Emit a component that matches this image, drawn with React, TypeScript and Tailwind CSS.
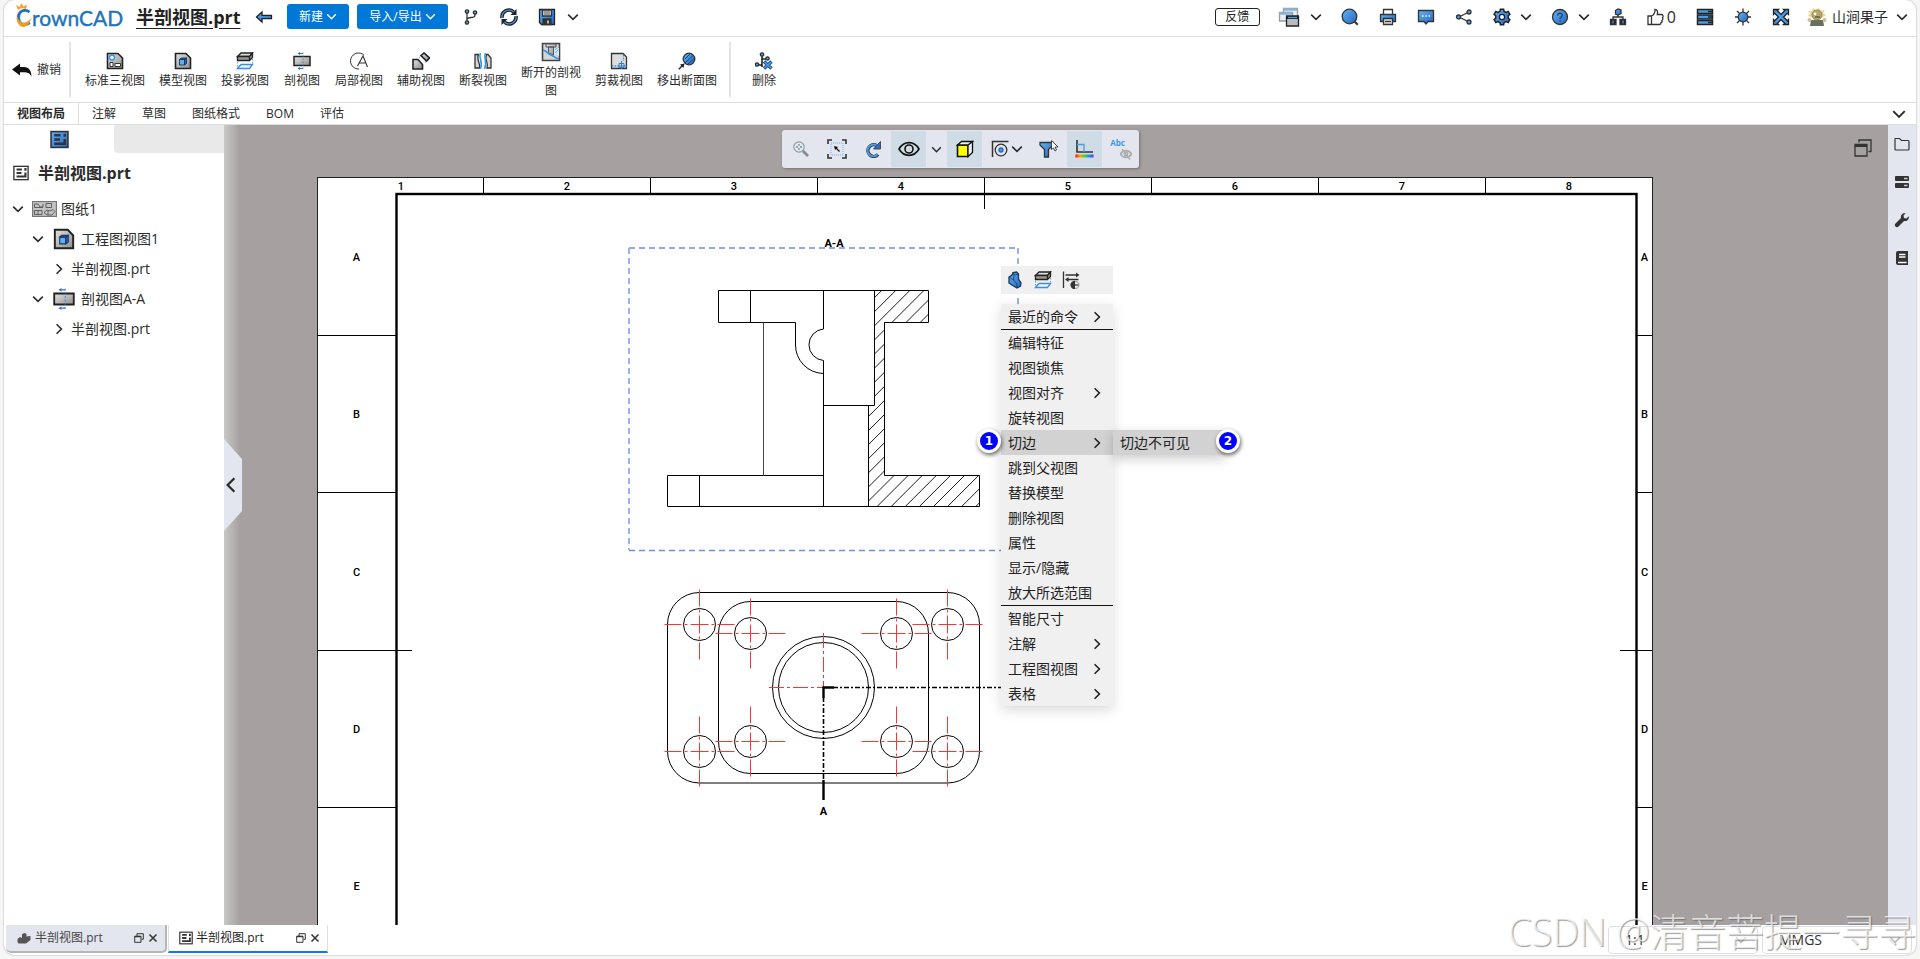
import React, { useState } from 'react';

type IconProps = { className?: string };

const Svg = ({ className = 'h-[18px] w-[18px]', box = '0 0 18 18', children }: { className?: string; box?: string; children: React.ReactNode }) => (
  <svg className={`${className} shrink-0`} viewBox={box} fill="none" stroke="#333" strokeWidth="1.3" aria-hidden="true">
    {children}
  </svg>
);

const Chevron = ({ dir = 'down', className = 'h-[10px] w-[10px]' }: { dir?: 'down' | 'right' | 'left'; className?: string }) => {
  const d = { down: 'M0.2 2.600L5 7.400L9.800 2.600', right: 'M2.600 0.200L7.400 5L2.600 9.800', left: 'M7.400 0.200L2.600 5L7.400 9.800' }[dir];
  return (
    <svg className={`${className} shrink-0 overflow-visible`} viewBox="0 0 10 10" fill="none" stroke="currentColor" strokeWidth="1.6" aria-hidden="true">
      <path d={d} />
    </svg>
  );
};

// Shared gradients referenced by every icon
const Defs = () => (
  <svg className="absolute h-0 w-0" aria-hidden="true">
    <defs>
      <linearGradient id="blue" x1="0" y1="0" x2="1" y2="1">
        <stop offset="0" stopColor="#63b3f3" />
        <stop offset="1" stopColor="#2565c0" />
      </linearGradient>
      <linearGradient id="gray" x1="0" y1="0" x2="1" y2="1">
        <stop offset="0" stopColor="#e2e2e2" />
        <stop offset="1" stopColor="#8f8f8f" />
      </linearGradient>
      <linearGradient id="rainbow">
        <stop offset="0" stopColor="#f00" />
        <stop offset="0.25" stopColor="#fa0" />
        <stop offset="0.5" stopColor="#5c3" />
        <stop offset="0.75" stopColor="#19e" />
        <stop offset="1" stopColor="#82d" />
      </linearGradient>
    </defs>
  </svg>
);

const Logo = () => (
  <svg className="h-[32px] w-[110px] shrink-0" viewBox="0 0 110 32" role="img" aria-label="CrownCAD">
    <text x="1" y="25" fontFamily="Lato" fontSize="22" fontWeight="700" fill="#2173b9">C</text>
    <text x="17" y="25" fontFamily="Lato" fontSize="21" fontWeight="400" fill="#2173b9" stroke="#2173b9" strokeWidth="0.4">rownCAD</text>
    <path d="M2 15C1 21 4 26 9 26C13 25 15 21 17 16C14 20 11 22 8 21.500C5 21 3 18 2 15Z" fill="#f59a1c" />
    <path d="M3 9L1 4L5 6L6 2L8.500 5.500L12 3.500L11 8C8 6.500 5 7 3 9Z" fill="#f7a12b" />
  </svg>
);

/* ---- header icons ---- */
const BackArrow = () => (
  <Svg><path d="M1.500 9L7 4V7.300H16.500V10.700H7V14Z" fill="url(#blue)" stroke="#222" /></Svg>
);
const BranchIcon = () => (
  <Svg>
    <path d="M5 5V13M13 6V7C13 9 11 9.500 9 9.500C7 9.500 5 10 5 12" />
    <circle cx="5" cy="3.500" r="1.700" fill="#4a9be8" /><circle cx="13" cy="4.500" r="1.700" fill="#4a9be8" /><circle cx="5" cy="14.500" r="1.700" fill="#4a9be8" />
  </Svg>
);
const SyncIcon = () => (
  <Svg>
    <path d="M2 10A7 7 0 0 1 13.500 3.800M16 8A7 7 0 0 1 4.500 14.200" stroke="#222" strokeWidth="3.600" />
    <path d="M2 10A7 7 0 0 1 13.500 3.800M16 8A7 7 0 0 1 4.500 14.200" stroke="#4a9be8" strokeWidth="1.200" />
    <path d="M16.500 1V7H10.500ZM1.500 17V11H7.500Z" fill="#222" stroke="none" />
  </Svg>
);
const SaveIcon = () => (
  <Svg>
    <path d="M1.500 1.500H16.500V16.500H3.500L1.500 14.500Z" fill="url(#blue)" stroke="#222" />
    <path d="M4.500 2H13.500V8H4.500Z" fill="#ddd" /><path d="M6 4H12M6 6H12" strokeWidth="0.800" />
    <path d="M5 11H13V16.500H5Z" fill="#333" /><path d="M10 12.500V15.500" stroke="#fff" />
  </Svg>
);
const WindowsIcon = () => (
  <Svg className="h-[20px] w-[22px]" box="0 0 22 20">
    <path d="M5.500 1.500H19.500V10H5.500Z" fill="#e8eef3" stroke="#9a9a9a" /><path d="M5.500 2.500H19.500" stroke="#8ab4d4" strokeWidth="2.500" />
    <path d="M1.500 5.500H14.500V14H1.500Z" fill="#e8eef3" stroke="#9a9a9a" /><path d="M1.500 6.500H14.500" stroke="#8ab4d4" strokeWidth="2.500" />
    <path d="M8.500 9H20.500V19H8.500Z" fill="#b9bcbf" stroke="#222" /><path d="M8.500 10.500H20.500" stroke="#222" strokeWidth="3" /><path d="M10 10.500H19" stroke="#4a9be8" />
  </Svg>
);
const SearchIcon = () => (
  <Svg><circle cx="8.500" cy="8.500" r="7.300" fill="url(#blue)" /><path d="M13.500 13.500L16.800 16.800" strokeWidth="2" /></Svg>
);
const PrintIcon = () => (
  <Svg>
    <path d="M4.500 1.500H13.500V7H4.500Z" fill="#fff" /><path d="M1.500 6.500H16.500V13.500H1.500Z" fill="url(#blue)" />
    <path d="M4.500 10.500H13.500V16.500H4.500Z" fill="#ddd" /><path d="M6 13.500H12" />
  </Svg>
);
const CommentIcon = () => (
  <Svg><path d="M1.500 2.500H16.500V13.500H11L9 16L7 13.500H1.500Z" fill="url(#blue)" /><path d="M5 8H6.500M8.300 8H9.800M11.500 8H13" stroke="#fff" /></Svg>
);
const ShareIcon = () => (
  <Svg><path d="M14 4L4 9L14 14" /><circle cx="14" cy="4" r="2" fill="#4a9be8" /><circle cx="3.500" cy="9" r="2" fill="#4a9be8" /><circle cx="14" cy="14" r="2" fill="#4a9be8" /></Svg>
);
const GearIcon = () => (
  <Svg>
    <path d="M7.400 1.300H10.600L11.100 3.500L13.200 4.500L15.200 3.400L16.900 6.300L15.300 7.800V10.200L16.900 11.700L15.200 14.600L13.200 13.500L11.100 14.500L10.600 16.700H7.400L6.900 14.500L4.800 13.500L2.800 14.600L1.100 11.700L2.700 10.200V7.800L1.100 6.300L2.800 3.400L4.800 4.500L6.900 3.500Z" fill="url(#blue)" stroke="#222" strokeWidth="1.500" />
    <circle cx="9" cy="9" r="2.600" fill="#fff" stroke="#222" />
  </Svg>
);
const HelpIcon = () => (
  <Svg><circle cx="9" cy="9" r="7.500" fill="url(#blue)" /><path d="M6.700 7.500C6.700 4.500 11.300 4.500 11.300 7.200C11.300 9 9 9 9 11M9 12.300V13.500" stroke="#1d3f70" /></Svg>
);
const SitemapIcon = () => (
  <Svg>
    <path d="M9 6V9M4 12V9H14V12" /><path d="M6.500 2.500L9 1L12 2V5.500L9 7L6.500 6Z" fill="url(#blue)" />
    <path d="M1.500 11.500H7V16.500H1.500ZM11 11.500H16.500V16.500H11Z" fill="#222" /><path d="M4 12.500V15.500M14 12.500V15.500" stroke="#4a9be8" />
  </Svg>
);
const ThumbIcon = () => (
  <Svg className="h-[18px] w-[17px]" box="0 0 17 18">
    <path d="M1 8H4.500V16.500H1ZM4.500 8C7 7 8 4.500 8 1.500C10.500 1.500 11 4 10.300 6.500H14.500C16.500 6.500 16.300 9 15.500 9.500C16.200 10.500 15.800 12 15 12.300C15.300 13.500 14.800 14.500 14 14.700C14 16 13.500 16.500 12.500 16.500H4.500" />
  </Svg>
);
const ServerStack = () => (
  <Svg>{[1.5, 7, 12.5].map(y => <g key={y}><rect x="1.500" y={y} width="15" height="4" fill="#4a9be8" stroke="#222" strokeWidth="1.500" /><path d={`M12 ${y + 2}H16`} stroke="#222" strokeWidth="1.500" /></g>)}</Svg>
);
const SunIcon = () => (
  <Svg>
    <path d="M9 0.500V17.500M1 9H17M3 3L15 15M15 3L3 15" /><circle cx="9" cy="9" r="4.800" fill="url(#blue)" />
  </Svg>
);
const ExpandIcon = () => (
  <Svg>
    <path d="M3 3L15 15M15 3L3 15" stroke="#222" strokeWidth="5" />
    <path d="M1.500 1.500H6.500L1.500 6.500ZM16.500 1.500V6.500L11.500 1.500ZM1.500 16.500V11.500L6.500 16.500ZM16.500 16.500H11.500L16.500 11.500Z" fill="#4a9be8" stroke="#222" />
    <path d="M3.500 3.500L14.500 14.500M14.500 3.500L3.500 14.500" stroke="#4a9be8" strokeWidth="2.400" />
  </Svg>
);
const Avatar = () => (
  <Svg className="h-[20px] w-[20px]" box="0 0 20 20">
    <path d="M3 6L1 4L5 4L6 1L9 3L12 0.500L13 3.500L18 3L16 6L19 8L16 10H4L1 9Z" fill="#f0d68a" stroke="none" />
    <circle cx="10" cy="8" r="5" fill="#b4a66e" stroke="#8a7d52" strokeWidth="0.800" /><circle cx="8" cy="7" r="1.400" fill="#fff" stroke="none" /><path d="M8 10H13" stroke="#6b5d3a" />
    <path d="M4 13H16L17 19H3Z" fill="#66705c" stroke="none" /><circle cx="2.500" cy="13" r="2" fill="#d9b98a" stroke="none" /><circle cx="17.500" cy="13" r="2" fill="#d9b98a" stroke="none" />
  </Svg>
);

/* ---- ribbon icons ---- */
const PAGE = 'M1.500 1.500H12L16.500 6V16.500H1.500Z';
const StandardIcon = () => (
  <Svg><path d={PAGE} fill="url(#gray)" stroke="#222" strokeWidth="1.600" /><circle cx="6" cy="5.500" r="2.500" fill="#e8f2fc" stroke="#3d8ee0" /><path d="M4 10.500H7V14.500H4ZM9 11.500H14.500V14.500H9Z" fill="#fff" strokeWidth="1" /></Svg>
);
const ModelIcon = ({ className }: IconProps) => (
  <Svg className={className}><path d={PAGE} fill="url(#gray)" stroke="#222" strokeWidth="1.600" /><path d="M5.500 7.500H10.500V13H5.500Z" fill="#62aef2" stroke="#17385f" strokeWidth="0.900" /><path d="M5.500 7.500L7 6H12.500L10.500 7.500ZM12.500 6V11.500L10.500 13V7.500Z" fill="#2565c0" stroke="#17385f" strokeWidth="0.900" /></Svg>
);
const ProjectIcon = () => (
  <Svg>
    <path d="M1.500 4.500L5 1H16.500L13.500 4.500Z" fill="#ddd" stroke="#222" /><path d="M1.500 4.500H13.500V8.500H1.500ZM13.500 4.500L16.500 1V5.500L13.500 8.500" fill="#999" stroke="#222" />
    <path d="M1.500 16.500L5 12.500H16.500L13.500 16.500Z" fill="#eaf5fd" stroke="#3d8ee0" /><path d="M1.500 10V16M16.500 7V12" stroke="#3d8ee0" strokeDasharray="1.500 1.500" strokeWidth="0.800" />
  </Svg>
);
const SectionIcon = ({ className }: IconProps) => (
  <Svg className={className}>
    <path d="M1 4.500H17V13.500H1Z" fill="url(#gray)" stroke="#222" strokeWidth="1.500" /><path d="M10 0.500V17.500" stroke="#2f6fc4" strokeDasharray="1.500 1.500" strokeWidth="0.700" />
    <path d="M10 1.500H7M10 16.500H7" stroke="#2f6fc4" strokeWidth="1" /><path d="M7 0L4.500 1.500L7 3ZM7 15L4.500 16.500L7 18Z" fill="#2f6fc4" stroke="none" />
  </Svg>
);
const LocalIcon = () => (
  <Svg><path d="M14 3.200A8 8 0 1 0 9 17" strokeWidth="1" /><path d="M7.500 14L13 4L17.500 15M9.500 11H15.500" strokeWidth="1.100" /></Svg>
);
const AuxIcon = () => (
  <Svg>
    <path d="M1 7.500H6L10.500 12.500V17H1Z" fill="url(#gray)" stroke="#222" strokeWidth="1.600" /><path d="M9 3.500L12 1L17.500 6L14.500 9Z" fill="url(#gray)" stroke="#222" strokeWidth="1.600" />
    <path d="M8 4.500L7 6.500M14 9.500L12 11" stroke="#3d8ee0" strokeWidth="0.800" strokeDasharray="1.500 1" />
  </Svg>
);
const BreakIcon = () => (
  <Svg>
    <path d="M4.500 2.500H1V16H5.500C7 12 2 8 4.500 2.500ZM12.500 2.500H14L17 6V16H13C15 11 10 8 12.500 2.500Z" fill="#d6d6d6" />
    <path d="M6.500 1C4 6 9.500 9 6.500 17M11.500 1C9 6 14 9 10.500 17" stroke="#3d9ae0" strokeWidth="1.600" />
  </Svg>
);
const BrokenOutIcon = () => (
  <Svg className="h-[20px] w-[20px]" box="0 0 20 20">
    <path d="M1.500 1.500H18.500V18.500H1.500Z" fill="#d3d6d8" stroke="#444" strokeWidth="1.600" /><path d="M13 6H18V14L13 12Z" fill="#cfe6f8" stroke="none" />
    <path d="M5 2H15V5H5ZM7.500 5H12.500V13L7.500 11Z" fill="url(#gray)" stroke="#555" strokeWidth="1" /><path d="M2 8C6 9 7 12 10 13S15 17 18 17" stroke="#3d8ee0" strokeWidth="1.600" /><path d="M14 11L17.500 7.500M14 8L16 6" stroke="#3d8ee0" strokeWidth="0.700" />
  </Svg>
);
const CropIcon = () => (
  <Svg><path d="M1.500 1.500H13L16.500 5V16.500H1.500Z" fill="#ddd" /><path d="M2 14H9M13.500 3V9" stroke="#3d8ee0" strokeDasharray="1.500 1.200" /><path d="M9 11.500H14V15.500H9ZM11.500 9V17M9 14H17" stroke="#2f7fd0" strokeWidth="1" /></Svg>
);
const RemovedIcon = () => (
  <Svg><circle cx="11" cy="7" r="5.800" fill="url(#blue)" /><path d="M7 7L12 2M7 11L15 3.500M10 12L16 6.500" stroke="#17385f" strokeWidth="0.900" /><path d="M0.800 17.200L4.500 13.500" strokeWidth="1.600" /><path d="M2 12.500L6.500 11.500L5.500 16Z" fill="#222" stroke="none" /></Svg>
);
const DeleteIcon = () => (
  <Svg>
    <path d="M7 3V15M7 7H11M2 13H7" stroke="#222" strokeWidth="1.600" /><circle cx="7" cy="2.500" r="1.700" fill="#4a9be8" /><circle cx="12.500" cy="6.500" r="1.700" fill="#4a9be8" /><circle cx="2" cy="12.500" r="1.700" fill="#4a9be8" />
    <path d="M9 9.500L16.500 16.500M16.500 9.500L9 16.500" stroke="#1d4f8f" strokeWidth="3.400" /><path d="M9.500 10L16 16M16 10L9.500 16" stroke="#4a9be8" strokeWidth="1.500" />
  </Svg>
);

/* ---- document icons ---- */
const SheetDocIcon = ({ className, blue }: IconProps & { blue?: boolean }) => (
  <Svg className={className}>
    <rect x="1" y="1.500" width="16" height="15" fill={blue ? 'url(#blue)' : '#fff'} stroke="#333" strokeWidth="1.500" />
    <path d="M4 5H10M4 9H9.500M4 13H14V8.500M14 3.500V6.500" strokeWidth="2.400" />
  </Svg>
);
const SheetIcon = () => (
  <Svg className="h-[16px] w-[25px]" box="0 0 25 16">
    <rect x="0.500" y="0.500" width="24" height="15" fill="#c4c4c4" stroke="#777" />
    <path d="M2.500 3H6L8 6H11V3M2.500 3V6.500H11M14 2.500H19.500V6.500H14ZM2.500 9.500H10V13.500H2.500ZM6 9.500V13.500M12 11.500L15 9L18 10L21 8.500L23 10.500L20 14H15ZM16 10V14" stroke="#555" strokeWidth="0.900" />
  </Svg>
);
const PartIcon = () => (
  <Svg className="h-[12px] w-[14px]" box="0 0 14 12"><path d="M0.500 7L3 5L5 6L5 2L8 1L9.500 2V4.500L13.500 4V8L9 11.500H1.500L0.500 10Z" fill="#555" stroke="none" /></Svg>
);
const RestoreIcon = () => (
  <Svg className="h-[10px] w-[10px]" box="0 0 10 10"><path d="M3 3V0.700H9.300V6.300H7.500M0.700 3.200H7V9.300H0.700Z" strokeWidth="1" /><path d="M0.700 3.600H7" /></Svg>
);

const ribbon = [
  { label: '标准三视图', icon: StandardIcon },
  { label: '模型视图', icon: ModelIcon },
  { label: '投影视图', icon: ProjectIcon },
  { label: '剖视图', icon: SectionIcon },
  { label: '局部视图', icon: LocalIcon },
  { label: '辅助视图', icon: AuxIcon },
  { label: '断裂视图', icon: BreakIcon },
  { label: '断开的剖视图', icon: BrokenOutIcon },
  { label: '剪裁视图', icon: CropIcon },
  { label: '移出断面图', icon: RemovedIcon },
];

const ribbonTabs = ['视图布局', '注解', '草图', '图纸格式', 'BOM', '评估'];

const menuItems = [
  { label: '最近的命令', sub: true, line: true },
  { label: '编辑特征' },
  { label: '视图锁焦' },
  { label: '视图对齐', sub: true },
  { label: '旋转视图' },
  { label: '切边', sub: true, active: true },
  { label: '跳到父视图' },
  { label: '替换模型' },
  { label: '删除视图' },
  { label: '属性' },
  { label: '显示/隐藏' },
  { label: '放大所选范围', line: true },
  { label: '智能尺寸' },
  { label: '注解', sub: true },
  { label: '工程图视图', sub: true },
  { label: '表格', sub: true },
];

function Header() {
  return (
    <header className="flex h-[37px] items-center border-b border-[#dcdee4] pr-[9px] pb-[7px] pl-[11px] pt-1">
      <Logo />
      <a href="#" className="ml-[11px] text-lg leading-6 font-bold text-[#222] underline underline-offset-4">半剖视图.prt</a>
      <button aria-label="返回" className="ml-[14px]"><BackArrow /></button>
      <button className="ml-[14px] flex h-[25px] w-[62px] items-center justify-center gap-1 rounded-[3px] bg-[#0078d7] text-xs text-white">
        新建<Chevron className="h-[9px] w-[9px]" />
      </button>
      <button className="ml-2 flex h-[25px] w-[91px] items-center justify-center gap-1 rounded-[3px] bg-[#0078d7] text-xs text-white">
        导入/导出<Chevron className="h-[9px] w-[9px]" />
      </button>
      <div className="ml-[14px] flex items-center gap-5">
        <button aria-label="分支"><BranchIcon /></button>
        <button aria-label="同步"><SyncIcon /></button>
        <div className="flex items-center gap-3">
          <button aria-label="保存"><SaveIcon /></button>
          <button aria-label="保存选项"><Chevron /></button>
        </div>
      </div>
      <div className="ml-auto flex items-center gap-5">
        <button className="-mr-[2px] h-[18px] w-[45px] rounded-[3px] border border-[#222] text-xs leading-4 text-[#222]">反馈</button>
        <div className="flex items-center gap-[11px]">
          <button aria-label="窗口"><WindowsIcon /></button>
          <button aria-label="窗口选项"><Chevron /></button>
        </div>
        <button aria-label="搜索"><SearchIcon /></button>
        <button aria-label="打印"><PrintIcon /></button>
        <button aria-label="消息"><CommentIcon /></button>
        <button aria-label="分享"><ShareIcon /></button>
        <div className="flex items-center gap-[10px]">
          <button aria-label="设置"><GearIcon /></button>
          <button aria-label="设置选项"><Chevron /></button>
        </div>
        <div className="flex items-center gap-[10px]">
          <button aria-label="帮助"><HelpIcon /></button>
          <button aria-label="帮助选项"><Chevron /></button>
        </div>
        <button aria-label="结构"><SitemapIcon /></button>
        <button className="flex items-center gap-[3px] text-base leading-5"><ThumbIcon />0</button>
        <button aria-label="列表"><ServerStack /></button>
        <button aria-label="主题"><SunIcon /></button>
        <button aria-label="全屏"><ExpandIcon /></button>
        <button className="-ml-[3px] flex items-center text-sm leading-5">
          <Avatar />
          <span className="mr-[9px] ml-[5px]">山涧果子</span>
          <Chevron />
        </button>
      </div>
    </header>
  );
}

function Ribbon() {
  return (
    <div className="flex h-[66px] border-b border-[#dcdee4] py-[5px] pl-2">
      <button className="flex items-center gap-[5px] pr-2 text-xs">
        <Svg className="h-[14px] w-[20px]" box="0 0 20 14"><path d="M0 6.500L8 0.500V4H12C17 4 19.500 8 19.500 13.500C17.500 10 15 9.300 12 9.300H8V12.500Z" fill="#111" stroke="none" /></Svg>
        撤销
      </button>
      <div className="w-[2px] bg-[#e3e4e8]" />
      <div className="flex pl-[7px]">
        {ribbon.map(({ label, icon: Icon }) => (
          <button key={label} className="flex max-w-[74px] min-w-[52px] flex-col items-center justify-center gap-[2px] px-[7px] pt-[3px] text-xs leading-[18px]">
            <Icon />
            <span>{label}</span>
          </button>
        ))}
      </div>
      <div className="ml-[5px] w-[2px] bg-[#e3e4e8]" />
      <button className="ml-[14px] flex flex-col items-center justify-center gap-[2px] px-[7px] pt-[3px] text-xs leading-[18px]">
        <DeleteIcon />
        删除
      </button>
    </div>
  );
}

function RibbonTabs() {
  const [active, setActive] = useState('视图布局');
  return (
    <div className="flex h-[22px] items-stretch border-b border-[#dcdee4] pr-[11px]">
      {ribbonTabs.map(tab => (
        <button
          key={tab}
          onClick={() => setActive(tab)}
          className={tab === active ? 'border-r border-[#dcdee4] px-[13px] text-xs font-bold' : 'px-[13px] text-xs'}
        >
          {tab}
        </button>
      ))}
      <button aria-label="收起" className="ml-auto"><Chevron className="h-[12px] w-[12px]" /></button>
    </div>
  );
}

function Tree() {
  return (
    <aside className="w-[220px] shrink-0 bg-white">
      <div className="flex h-[28px]">
        <button aria-label="图纸树" className="flex w-[110px] items-center justify-center"><SheetDocIcon blue className="h-[19px] w-[19px]" /></button>
        <div className="flex-1 rounded-bl bg-[#e9e9e9]" />
      </div>
      <h2 className="mt-2 flex h-6 items-center gap-[9px] pl-[9px] text-base font-bold"><SheetDocIcon className="h-[16px] w-[16px]" />半剖视图.prt</h2>
      <ul className="mt-[9px] text-sm">
        <li className="flex h-[30px] items-center pl-[9px]"><Chevron /><span className="mr-[4px] ml-[9px]"><SheetIcon /></span>图纸1</li>
        <li className="flex h-[30px] items-center pl-[29px]"><Chevron /><span className="mr-[6px] ml-[10px]"><ModelIcon className="h-[22px] w-[22px]" /></span>工程图视图1</li>
        <li className="flex h-[30px] items-center gap-[7px] pl-[50px]"><Chevron dir="right" />半剖视图.prt</li>
        <li className="flex h-[30px] items-center pl-[29px]"><Chevron /><span className="mr-[6px] ml-[10px]"><SectionIcon className="h-[22px] w-[22px]" /></span>剖视图A-A</li>
        <li className="flex h-[30px] items-center gap-[7px] pl-[50px]"><Chevron dir="right" />半剖视图.prt</li>
      </ul>
    </aside>
  );
}

const letters = ['A', 'B', 'C', 'D', 'E'];
const holes = [[699, 624], [947, 624], [699, 751], [947, 751], [750, 633], [896, 633], [750, 741], [896, 741]];

function Drawing() {
  const hatch = Array.from({ length: 26 }, (_, i) => 1158 + i * 14.1).map(c => `M${c - 520} 520L${c - 280} 280`).join('');
  return (
    <svg className="block h-[800px] w-[1664px] max-w-none" viewBox="224 125 1664 800" fill="none" stroke="#000">
      <defs>
        <clipPath id="cut">
          <path d="M874.500 290.500H928.500V322.500H884.500V475.500H979.500V506.500H868.500V405.500H874.500Z" />
        </clipPath>
      </defs>
      <rect x="317.500" y="177.500" width="1335" height="900" fill="#fff" stroke="#222" />
      <rect x="396.500" y="194" width="1240" height="900" strokeWidth="2.400" />
      {[335.5, 492.5, 650.5, 807.5].map(y => (
        <path key={y} d={y === 650.5 ? `M317 ${y}H412M1620 ${y}H1652` : `M317 ${y}H396M1637 ${y}H1652`} />
      ))}
      {[483.5, 650.5, 817.5, 984.5, 1151.5, 1318.5, 1485.5].map(x => (
        <path key={x} d={`M${x} 178V${x === 984.5 ? 209 : 194}`} />
      ))}
      <g fill="#000" stroke="none" fontFamily="Roboto" fontSize="11" fontWeight="500" textAnchor="middle">
        {letters.map((l, i) => (
          <React.Fragment key={l}>
            <text x="356.500" y={261 + i * 157.3}>{l}</text>
            <text x="1644.500" y={261 + i * 157.3}>{l}</text>
          </React.Fragment>
        ))}
        {[401, 567, 734, 901, 1068, 1235, 1402, 1569].map((x, i) => <text key={x} x={x} y="190">{i + 1}</text>)}
        <text x="834" y="247" fontWeight="700">A-A</text>
        <text x="823.500" y="815" fontWeight="700">A</text>
      </g>

      {/* section A-A */}
      <path d="M629 248H1018M629 550.500H1018" stroke="#6f8fe6" strokeDasharray="6 4" strokeWidth="1.300" />
      <path d="M629 248V550M1018 248V550" stroke="#9db2f3" strokeDasharray="6 4" strokeWidth="2" />
      <path d="M795.500 322.500H718.500V290.500H928.500V322.500H884.500V475.500H979.500V506.500H667.500V475.500H823.500M750.500 290.500V322.500M699.500 475.500V506.500" />
      <path d="M763.500 322.500V475.500" stroke="#444" />
      <path d="M823.500 290.500V329A15.800 15.800 0 0 0 823.500 360.500V506.500M795.500 322.500V345A28.500 28.500 0 0 0 823.500 373.500" />
      <path d="M874.500 290.500V405.500H823.500M868.500 405.500V506.500" />
      <path d={hatch} clipPath="url(#cut)" strokeWidth="0.900" />

      {/* top view */}
      <rect x="667.500" y="592.500" width="312" height="190.500" rx="32" />
      <rect x="718.500" y="601.500" width="210" height="172" rx="32" />
      <circle cx="823.500" cy="687.500" r="51" />
      <circle cx="823.500" cy="687.500" r="45" />
      {holes.map(([x, y]) => (
        <g key={`${x}-${y}`}>
          <circle cx={x + 0.5} cy={y + 0.5} r="16" />
          <path d={`M${x - 34.5} ${y + 0.5}h70M${x + 0.5} ${y - 34.5}v70`} stroke="#f33" strokeDasharray="17 3 3 3 18 3 3 3 17" />
        </g>
      ))}
      <path d="M823.500 633V687M769 687.500H823" stroke="#f33" strokeDasharray="15 3 3 3" />
      <path d="M833 687.500H1002M823.500 697V781" strokeDasharray="5 2 2 2" strokeWidth="1.600" />
      <path d="M834 687.500H823.500V698M823.500 780V800" strokeWidth="2.400" />
    </svg>
  );
}

const tool = 'flex h-9 w-[35px] items-center justify-center';
const toolOn = 'flex h-9 w-[35px] items-center justify-center bg-[#cfdce5]';

function ViewToolbar() {
  return (
    <div className="absolute top-[5px] left-[558px] flex gap-px rounded-[3px] bg-[#e3e6ee] p-px shadow-[1px_1px_3px_rgba(0,0,0,0.3)]">
      <button aria-label="缩放" className={tool}>
        <Svg><circle cx="7" cy="7" r="5.200" fill="#dcebef" stroke="#999" strokeWidth="1.200" /><path d="M4.500 7H5.500M8.500 7H9.500M7 4.500V5.500M7 8.500V9.500" stroke="#333" /><path d="M11 11L16 16" stroke="#888" strokeWidth="2.600" /></Svg>
      </button>
      <button aria-label="适应窗口" className={tool}>
        <Svg className="h-[20px] w-[20px]" box="0 0 20 20"><path d="M1 5V1H5M15 1H19V5M19 15V19H15M5 19H1V15" strokeWidth="1.600" /><rect x="4" y="4" width="12" height="12" stroke="#8cc3ee" strokeDasharray="1 1" /><path d="M12.500 12.500L9 9" stroke="#111" /><path d="M7 7L11 8L8 11Z" fill="#111" stroke="none" /></Svg>
      </button>
      <button aria-label="旋转" className={tool}>
        <Svg><path d="M14 14.500A5.800 5.800 0 1 1 12.500 5.500" stroke="#333" strokeWidth="3.400" /><path d="M13.500 14.500A5.800 5.800 0 1 1 12.500 5.500" stroke="#4a9be8" strokeWidth="2" /><path d="M16.500 1.500V9H9.500Z" fill="#2f6fc4" stroke="#333" strokeWidth="0.800" /></Svg>
      </button>
      <button aria-label="显示" className={toolOn}>
        <Svg className="h-[20px] w-[22px]" box="0 0 22 20"><path d="M1 10C6 1.500 16 1.500 21 10C16 18.500 6 18.500 1 10Z" stroke="#111" strokeWidth="1.600" /><circle cx="11" cy="10" r="4" stroke="#111" strokeWidth="1.600" /></Svg>
      </button>
      <button aria-label="显示选项" className="flex w-[19px] items-center justify-center"><Chevron className="h-[9px] w-[9px]" /></button>
      <button aria-label="着色" className={toolOn}>
        <Svg><path d="M1.500 5H12V16.500H1.500Z" fill="#ff0" stroke="#111" strokeWidth="1.600" /><path d="M1.500 5L5.500 1.500H16.500L12 5ZM16.500 1.500V12.500L12 16.500V5Z" fill="#eee" stroke="#111" /></Svg>
      </button>
      <button aria-label="中心标记" className="flex w-[47px] items-center justify-center gap-[3px]">
        <Svg><path d="M1.500 17V1.500H17.500" strokeWidth="1.500" /><circle cx="10" cy="10" r="5.800" /><circle cx="10" cy="10" r="2" fill="#4a9be8" stroke="#2565c0" /></Svg>
        <Chevron />
      </button>
      <button aria-label="过滤" className={tool}>
        <Svg className="h-[18px] w-[20px]" box="0 0 20 18"><path d="M1 2.500H14V5L9.500 9.500V17H5.500V9.500L1 5Z" fill="url(#blue)" /><path d="M12.500 0.500L19 7H16L17.500 10L16 11L14.500 8L12.500 9.500Z" fill="#fff" strokeWidth="0.900" /></Svg>
      </button>
      <button aria-label="坐标" className={toolOn}>
        <Svg className="h-[20px] w-[19px]" box="0 0 19 20"><path d="M2 1V13H18" strokeWidth="1.600" /><path d="M2 5.500H9V13" stroke="#4a9be8" /><rect x="0.500" y="15.500" width="18" height="3" fill="url(#rainbow)" stroke="none" /></Svg>
      </button>
      <button aria-label="隐藏文字" className="flex h-9 w-[35px] flex-col items-center">
        <span className="mr-[6px] pt-[7px] text-[8px] leading-[10px] font-bold text-[#3f97e4]">Abc</span>
        <Svg className="ml-[10px] h-[12px] w-[12px]" box="0 0 12 12"><path d="M0.500 6C3 1.500 9 1.500 11.500 6C9 10.500 3 10.500 0.500 6Z" stroke="#aaa" strokeWidth="1.600" /><circle cx="6" cy="6" r="1.800" stroke="#aaa" /><path d="M2 1L10 11.500" stroke="#aaa" /></Svg>
      </button>
    </div>
  );
}

const Badge = ({ n, className }: { n: number; className: string }) => (
  <span className={`absolute flex h-6 w-6 items-center justify-center rounded-full border-[3px] border-white bg-[#0000ff] font-['DejaVu_Sans'] text-xs font-bold text-white shadow-[1px_2px_4px_rgba(0,0,0,0.6)] ${className}`}>
    {n}
  </span>
);

function ContextMenu() {
  return (
    <div className="absolute top-[141px] left-[777px] w-[112px] text-sm text-[#222]">
      <div className="flex h-[28px] items-center gap-[10px] bg-[#f0f0f0] px-[5px]">
        <button aria-label="编辑零件"><Svg><path d="M3 6L6 4L7 1.500L10.500 1L12.500 3L12.500 8L15 12L14.500 15L11 17L6 14L3 12Z" fill="url(#blue)" stroke="#17385f" /><path d="M7 1.500L8 4L7.500 9L11 13V17M8 4L12.500 3M7.500 9L3 6" stroke="#17385f" strokeWidth="0.800" /></Svg></button>
        <button aria-label="投影"><ProjectIcon /></button>
        <button aria-label="尺寸"><Svg><path d="M1.500 0.500V17M3.500 4H15M5 8.500H16.500" /><path d="M14 1.500L17.500 4L14 6.500ZM6.500 6L3 8.500L6.500 11Z" fill="#333" stroke="none" /><path d="M13 10.500A4 3.500 0 0 0 13 17.500" fill="#333" /><path d="M9 14H17" /><path d="M13 10.500A4 3.500 0 0 1 13 17.500" stroke="#aaa" /></Svg></button>
      </div>
      <ul className="mt-[10px] bg-[#f0f0f0] shadow-[0_4px_12px_rgba(0,0,0,0.15)]">
        {menuItems.map(({ label, sub, active, line }) => (
          <li key={label} className={`relative ${line ? 'border-b border-[#111]' : ''}`}>
            <button className={`flex h-[25px] w-full items-center justify-between pr-[11px] pl-[7px] ${active ? 'bg-[#d2d2d2]' : ''}`}>
              {label}
              {sub && <Chevron dir="right" />}
            </button>
            {active && (
              <>
                <button className="absolute top-0 left-full h-[25px] w-[112px] bg-[#d2d2d2] pl-[7px] text-left shadow-[0_4px_12px_rgba(0,0,0,0.2)]">切边不可见</button>
                <Badge n={1} className="-top-px -left-6" />
                <Badge n={2} className="-top-px left-[215px]" />
              </>
            )}
          </li>
        ))}
      </ul>
    </div>
  );
}

function Canvas() {
  return (
    <main className="relative min-w-0 flex-1 overflow-hidden bg-[#a6a0a0]">
      <Drawing />
      <div className="absolute inset-y-0 left-0 w-4 bg-linear-to-r from-[#c8c8c5] to-transparent" />
      <button aria-label="收起侧栏" className="absolute top-[314px] left-0 flex h-[92px] w-[18px] items-center bg-[#e3e6ee] [clip-path:polygon(0_0,100%_20px,100%_72px,0_100%)]">
        <Chevron dir="left" className="h-[14px] w-[14px]" />
      </button>
      <ViewToolbar />
      <button aria-label="窗口" className="absolute top-[14px] right-4">
        <Svg><path d="M5 3.500V1H17V12.500H14.500" strokeWidth="1.300" /><path d="M1 5.500H13V17H1Z" /><path d="M1 6.500H13" strokeWidth="3" /></Svg>
      </button>
      <ContextMenu />
    </main>
  );
}

function RightBar() {
  return (
    <nav className="flex w-[28px] shrink-0 flex-col items-center gap-[22px] bg-[#e3e6ef] pt-[11px]">
      <button aria-label="文件夹"><Svg className="h-[16px] w-[16px]" box="0 0 16 16"><path d="M1 3Q1 2.500 1.500 2.500H5.500L7.500 4.500H14Q15 4.500 15 5.500V13Q15 14 14 14H2Q1 14 1 13Z" strokeWidth="1.200" /></Svg></button>
      <button aria-label="数据"><Svg className="h-[16px] w-[16px]" box="0 0 16 16"><path d="M2 2H14Q15 2 15 3V6Q15 7 14 7H2Q1 7 1 6V3Q1 2 2 2ZM2 9H14Q15 9 15 10V13Q15 14 14 14H2Q1 14 1 13V10Q1 9 2 9Z" fill="#333" stroke="none" /><path d="M10 4.500H13.500M10 11.500H13.500" stroke="#ccc" /></Svg></button>
      <button aria-label="工具"><Svg className="h-[16px] w-[16px]" box="0 0 16 16"><path d="M14.700 4.300L12.500 6.500L10 6L9.500 3.500L11.700 1.300C9 0.500 6.300 2.800 7 6L1.500 11.500C0.500 12.500 0.700 13.700 1.500 14.500C2.300 15.300 3.500 15.500 4.500 14.500L10 9C13.200 9.700 15.500 7 14.700 4.300Z" fill="#333" stroke="none" /></Svg></button>
      <button aria-label="手册"><Svg className="h-[16px] w-[16px]" box="0 0 16 16"><path d="M4 1H14V15H4Q2 15 2 13V3Q2 1 4 1Z" fill="#333" stroke="none" /><path d="M5 4.500H11.500M5 7H11.500M4 12.500H12.500" stroke="#fff" /></Svg></button>
    </nav>
  );
}

function Footer() {
  const selectClass = 'h-[28px] w-[150px] appearance-none rounded border border-[#dcdee6] bg-white pl-4 text-sm text-[#333]';
  return (
    <footer className="flex h-[30px] items-start pr-1 pl-[2px] text-xs text-[#444]">
      <div className="flex h-[28px] w-[161px] items-center rounded-b-[5px] border-r-2 border-b-2 border-[#b4b6bb] bg-[#e3e6ee] pr-[7px] pl-[11px]">
        <PartIcon /><span className="ml-1">半剖视图.prt</span>
        <button aria-label="还原" className="ml-auto"><RestoreIcon /></button>
        <button aria-label="关闭" className="ml-1"><Svg className="h-[10px] w-[10px]" box="0 0 10 10"><path d="M1.500 1.500L8.500 8.500M8.500 1.500L1.500 8.500" strokeWidth="1.500" /></Svg></button>
      </div>
      <div className="ml-px flex h-[28px] w-[160px] items-center border-x border-b-2 border-x-[#dcdee4] border-b-[#0a7cf0] pr-[7px] pl-[10px] text-[#222]">
        <SheetDocIcon className="h-[14px] w-[14px]" /><span className="ml-[3px]">半剖视图.prt</span>
        <button aria-label="还原" className="ml-auto"><RestoreIcon /></button>
        <button aria-label="关闭" className="ml-1"><Svg className="h-[10px] w-[10px]" box="0 0 10 10"><path d="M1.500 1.500L8.500 8.500M8.500 1.500L1.500 8.500" strokeWidth="1.500" /></Svg></button>
      </div>
      <div className="mt-px ml-auto flex gap-1 text-[#b9bcc4]">
        <div className="relative">
          <select aria-label="比例" className={selectClass}><option>1:1</option></select>
          <span className="pointer-events-none absolute top-[9px] right-3"><Chevron /></span>
        </div>
        <div className="relative">
          <select aria-label="单位" className={selectClass}><option>MMGS</option></select>
          <span className="pointer-events-none absolute top-[9px] right-3"><Chevron /></span>
        </div>
      </div>
    </footer>
  );
}

export default function App() {
  return (
    <div className="relative flex h-screen overflow-hidden bg-[#f6f6f6] px-1 pb-1 font-['Open_Sans','Noto_Sans_CJK_SC',sans-serif] text-[#2b2b2b]">
      <Defs />
      <div className="flex min-w-0 flex-1 flex-col overflow-hidden rounded-[10px] bg-white shadow-[0_0_2px_rgba(0,0,0,0.35)]">
        <Header />
        <Ribbon />
        <RibbonTabs />
        <div className="flex min-h-0 flex-1">
          <Tree />
          <Canvas />
          <RightBar />
        </div>
        <Footer />
      </div>
      <div className="pointer-events-none absolute right-1 bottom-1 text-[38px] leading-[48px] font-light whitespace-nowrap text-white/70 [text-shadow:1px_1px_1px_rgba(90,90,90,0.6)]">
        CSDN @清音菩提一寻寻
      </div>
    </div>
  );
}
